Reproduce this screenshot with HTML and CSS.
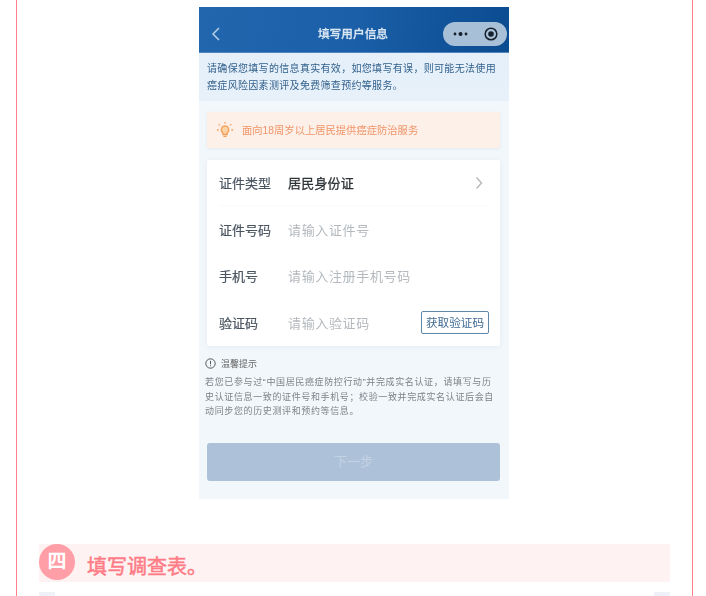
FILE: index.html
```html
<!DOCTYPE html>
<html lang="zh-CN">
<head>
    <meta charset="UTF-8">
    <title>填写用户信息</title>
    <link rel="stylesheet" href="styles.css">
</head>
<body>
    <div class="article">
        <div class="phone">
            <div class="nav">
                <svg class="nav-back" width="10" height="16" viewBox="0 0 10 16"><path d="M8 2 2 8l6 6" fill="none" stroke="#b9cfe6" stroke-width="1.500"/></svg>
                <div class="nav-title">填写用户信息</div>
                <div class="capsule">
                    <svg width="15" height="6" viewBox="0 0 15 6"><circle cx="2" cy="3" r="1.400" fill="#16202c"/><circle cx="7.500" cy="3" r="2" fill="#16202c"/><circle cx="13" cy="3" r="1.400" fill="#16202c"/></svg>
                    <svg width="14" height="14" viewBox="0 0 14 14"><circle cx="7" cy="7" r="5.800" fill="none" stroke="#16202c" stroke-width="1.500"/><circle cx="7" cy="7" r="2.800" fill="#16202c"/></svg>
                </div>
            </div>
            <div class="intro">请确保您填写的信息真实有效，如您填写有误，则可能无法使用癌症风险因素测评及免费筛查预约等服务。</div>
            <div class="notice">
                <svg width="18" height="18" viewBox="0 0 20 20" fill="none" stroke="#f4a05a" stroke-width="1.400">
                    <path d="M10 5.500a4.200 4.200 0 0 0-2.400 7.600v1.900h4.800v-1.900A4.200 4.200 0 0 0 10 5.500z" fill="#fbd3a4"/>
                    <path d="M8.200 17.200h3.600M10 1v2M3 3.500l1.400 1.400M17 3.500l-1.400 1.400M1 10h2M17 10h2"/>
                </svg>
                <span>面向18周岁以上居民提供癌症防治服务</span>
            </div>
            <div class="form-card">
                <div class="form-row first">
                    <div class="form-label">证件类型</div>
                    <div class="form-value">居民身份证</div>
                    <svg class="row-arrow" width="8" height="14" viewBox="0 0 8 14"><path d="m1.500 1.500 5 5.500-5 5.500" fill="none" stroke="#b4b9be" stroke-width="1.400"/></svg>
                </div>
                <div class="form-row">
                    <div class="form-label">证件号码</div>
                    <div class="form-hint">请输入证件号</div>
                </div>
                <div class="form-row">
                    <div class="form-label">手机号</div>
                    <div class="form-hint">请输入注册手机号码</div>
                </div>
                <div class="form-row">
                    <div class="form-label">验证码</div>
                    <div class="form-hint">请输入验证码</div>
                    <div class="code-btn">获取验证码</div>
                </div>
            </div>
            <div class="tips">
                <div class="tips-title">
                    <svg width="11" height="11" viewBox="0 0 11 11"><circle cx="5.500" cy="5.500" r="4.700" fill="none" stroke="#555" stroke-width="1"/><path d="M5.500 2.800v3.400M5.500 7.200v1" stroke="#555" stroke-width="1"/></svg>
                    <span>温馨提示</span>
                </div>
                <p>若您已参与过“中国居民癌症防控行动”并完成实名认证，请填写与历史认证信息一致的证件号和手机号；校验一致并完成实名认证后会自动同步您的历史测评和预约等信息。</p>
            </div>
            <div class="next-btn">下一步</div>
        </div>

        <div class="step-title">
            <div class="step-num">四</div>
            <div class="step-text">填写调查表。</div>
        </div>

        <div class="next-img">
            <div class="next-img-side"></div>
            <div class="next-img-side"></div>
        </div>
    </div>
</body>
</html>
```

FILE: styles.css
```css
html, body {
    margin: 0;
    height: 100%;
    overflow: hidden;
    background-color: #fff;
}
body {
    font-family: "Liberation Sans", "Noto Sans CJK SC", sans-serif;
}
.article {
    box-sizing: border-box;
    width: 677px;
    height: 596px;
    margin-left: 16px;
    padding-top: 7px;
    border-left: 1px solid #ff7f89;
    border-right: 1px solid #ff7f89;
    overflow: hidden;
}
.phone {
    box-sizing: border-box;
    width: 310px;
    height: 492px;
    margin-left: 182px;
    background-color: #f2f7fb;
    overflow: hidden;
}
.nav {
    display: flex;
    align-items: center;
    box-sizing: border-box;
    height: 46px;
    padding: 6px 2px 0 12px;
    background: linear-gradient(100deg, #2266ae 0%, #1a5fa8 50%, #0b4b90 100%);
    border-bottom: 1px solid #4f86bd;
}
.nav-back {
    margin-top: 2px;
}
.nav-title {
    flex: 1;
    padding-left: 42px;
    text-align: center;
    font-size: 11.700px;
    font-weight: 500;
    -webkit-text-stroke: 0.25px #dbe7f3;
    color: #dbe7f3;
    filter: blur(0.4px);
}
.capsule {
    display: flex;
    align-items: center;
    justify-content: space-between;
    box-sizing: border-box;
    width: 64px;
    height: 24px;
    margin-top: 3px;
    padding: 0 9px 0 10px;
    border-radius: 12px;
    background-color: #a8bfd8;
}
.intro {
    box-sizing: border-box;
    height: 48px;
    padding: 7px 8px 0;
    font-size: 10px;
    line-height: 17px;
    letter-spacing: 0.32px;
    color: #33618c;
    background: linear-gradient(#e4eff9, #e8f1fa);
    filter: blur(0.4px);
}
.notice {
    display: flex;
    align-items: center;
    gap: 8px;
    box-sizing: border-box;
    width: 293px;
    height: 36px;
    margin: 11px 0 0 8px;
    padding-left: 9px;
    font-size: 10.300px;
    color: #f09468;
    background-color: #fdf0e8;
    border-radius: 2px;
    box-shadow: 0 1px 3px rgba(180, 180, 180, 0.2);
}
.notice span {
    padding-bottom: 1px;
    filter: blur(0.4px);
}
.form-card {
    box-sizing: border-box;
    width: 293px;
    height: 186px;
    margin: 12px 0 0 8px;
    padding: 0 11px 0 12px;
    background-color: #fff;
    border-radius: 2px;
    box-shadow: 0 1px 4px rgba(190, 200, 215, 0.25);
}
.form-row {
    display: flex;
    align-items: center;
    box-sizing: border-box;
    height: 46.300px;
    font-size: 13px;
}
.form-row.first {
    border-bottom: 1px solid #f9fafb;
}
.form-label {
    width: 69px;
    color: #4b5560;
    -webkit-text-stroke: 0.2px #4b5560;
    filter: blur(0.4px);
}
.form-value {
    flex: 1;
    letter-spacing: 0.2px;
    color: #2f3438;
    -webkit-text-stroke: 0.3px #2f3438;
    filter: blur(0.4px);
}
.form-hint {
    flex: 1;
    letter-spacing: 0.65px;
    color: #b4b9be;
    filter: blur(0.4px);
}
.row-arrow {
    margin-right: 6px;
}
.code-btn {
    box-sizing: border-box;
    width: 68px;
    height: 23px;
    line-height: 21px;
    text-align: center;
    font-size: 11.600px;
    color: #3f6a92;
    border: 1px solid #5f87aa;
    border-radius: 2px;
    filter: blur(0.2px);
}
.tips {
    margin: 11px 14px 0 6px;
}
.tips-title {
    display: flex;
    align-items: center;
    gap: 5px;
    font-size: 9px;
    color: #666;
    filter: blur(0.4px);
}
.tips p {
    margin: 5px 0 0;
    font-size: 9px;
    line-height: 14.500px;
    letter-spacing: 0.63px;
    color: #7f8388;
    filter: blur(0.4px);
}
.next-btn {
    width: 293px;
    height: 38px;
    margin: 24px 0 0 8px;
    line-height: 38px;
    text-align: center;
    font-size: 13px;
    color: #c4d3e3;
    background-color: #adc1d9;
    border-radius: 3px;
}
.step-title {
    display: flex;
    align-items: center;
    position: relative;
    box-sizing: border-box;
    width: 631px;
    height: 38px;
    margin: 45px 0 0 22px;
    padding: 4px 0 0 48px;
    background-color: #fef3f2;
}
.step-num {
    position: absolute;
    left: 0;
    top: 0;
    width: 36px;
    height: 36px;
    line-height: 35px;
    text-align: center;
    font-size: 19px;
    font-weight: bold;
    color: #fff;
    background-color: #ff9ea6;
    border-radius: 50%;
}
.step-text {
    font-size: 20px;
    color: #ff7b86;
    -webkit-text-stroke: 0.5px #ff7b86;
}
.next-img {
    display: flex;
    justify-content: space-between;
    width: 631px;
    margin: 10px 0 0 22px;
}
.next-img-side {
    width: 16px;
    height: 10px;
    background-color: #eef1f7;
}
```
